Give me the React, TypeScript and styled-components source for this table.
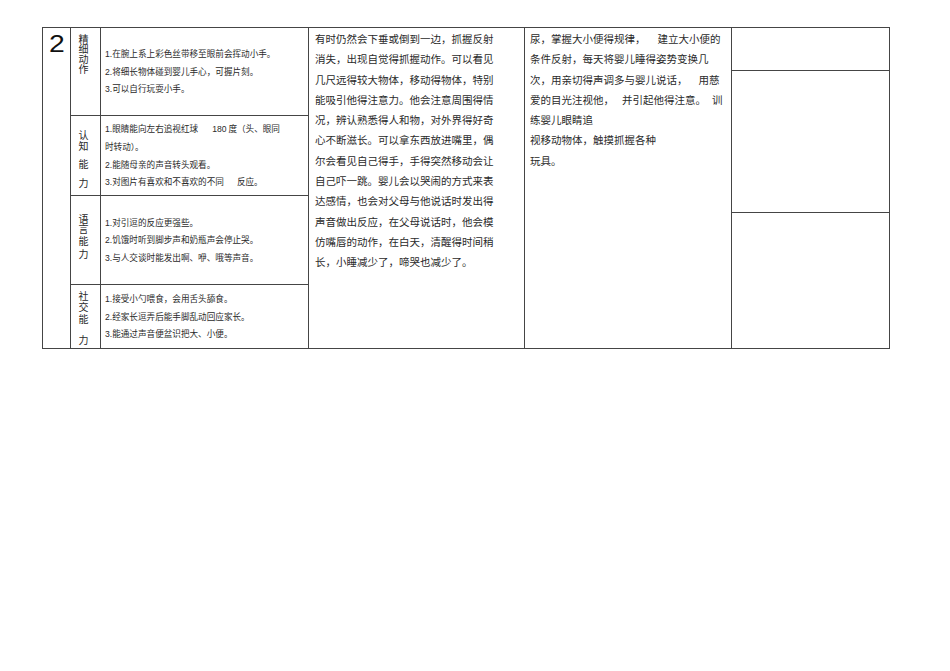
import React from "react";
import styled, { createGlobalStyle } from "styled-components";

const GlobalStyle = createGlobalStyle`
  html, body {
    margin: 0;
    padding: 0;
    background: #ffffff;
  }
  body {
    font-family: "Noto Sans CJK SC", "Noto Sans", sans-serif;
    color: #222;
  }
`;

const LINE = "#454545";

const Page = styled.div`
  width: 950px;
  height: 671px;
  box-sizing: border-box;
  padding: 27px 0 0 42px;
  background: #fff;
`;

const Table = styled.div`
  width: 848px;
  height: 322px;
  box-sizing: border-box;
  display: grid;
  grid-template-columns: 27px 237px 215px 206px 157px;
  grid-template-rows: 320px;
  gap: 1px;
  padding: 1px;
  background: ${LINE};
`;

const Cell = styled.div`
  background: #fff;
  box-sizing: border-box;
  min-width: 0;
  overflow: hidden;
`;

const Number = styled.div`
  font-family: "Liberation Sans", Arial, sans-serif;
  font-size: 24px;
  line-height: 24px;
  color: #111;
  padding: 4px 0 0 5px;
  transform: scaleX(1.18);
  transform-origin: left top;
`;

const Block = styled.div`
  display: grid;
  grid-template-columns: 29px 207px;
  grid-template-rows: 87px 79px 88px 63px;
  gap: 1px;
  background: ${LINE};
`;

const LabelCell = styled.div`
  background: #fff;
  box-sizing: border-box;
  overflow: hidden;
`;

const LabelText = styled.div<{ $pt: number }>`
  writing-mode: vertical-rl;
  text-orientation: upright;
  font-size: 10px;
  line-height: 10px;
  margin: ${(p) => p.$pt}px 0 0 7px;
  color: #2a2a2a;
  white-space: nowrap;
`;

const LabelChar = styled.span<{ $ls: number }>`
  letter-spacing: ${(p) => p.$ls}px;
`;

const ItemCell = styled.div`
  background: #fff;
  display: flex;
  flex-direction: column;
  justify-content: center;
  padding: 0 0 0 4px;
  box-sizing: border-box;
`;

const ItemLine = styled.div`
  font-size: 8.6px;
  line-height: 17.6px;
  height: 17.6px;
  white-space: nowrap;
  color: #2a2a2a;
`;

const Num = styled.span`
  font-family: "Liberation Sans", Arial, sans-serif;
`;

const Gap = styled.span<{ $w: number }>`
  display: inline-block;
  width: ${(p) => p.$w}px;
`;

const TextCell = styled.div<{ $pl: number }>`
  background: #fff;
  padding: 1px 0 0 ${(p) => p.$pl}px;
  box-sizing: border-box;
`;

const TextLine = styled.div`
  font-size: 10.5px;
  line-height: 20.3px;
  height: 20.3px;
  white-space: nowrap;
  color: #2a2a2a;
`;

const Stack = styled.div`
  display: grid;
  grid-template-rows: 42px 141px 135px;
  gap: 1px;
  background: ${LINE};
`;

const Blank = styled.div`
  background: #fff;
`;

type Seg = string | { gap: number };

interface Section {
  label: string;
  pt: number;
  spacing: number[];
  lines: Seg[][];
}

const sections: Section[] = [
  {
    label: "精细动作",
    pt: 6,
    spacing: [0, 0, 0, 0],
    lines: [
      ["1.", "在腕上系上彩色丝带移至眼前会挥动小手。"],
      ["2.", "将细长物体碰到婴儿手心，可握片刻。"],
      ["3.", "可以自行玩耍小手。"],
    ],
  },
  {
    label: "认知能力",
    pt: 14,
    spacing: [1.5, 8, 8.5, 0],
    lines: [
      ["1.", "眼睛能向左右追视红球", { gap: 14 }, "180", " 度（头、眼同"],
      ["时转动）。"],
      ["2.", "能随母亲的声音转头观看。"],
      ["3.", "对图片有喜欢和不喜欢的不同", { gap: 13 }, "反应。"],
    ],
  },
  {
    label: "语言能力",
    pt: 18,
    spacing: [0, 2.5, 2.5, 0],
    lines: [
      ["1.", "对引逗的反应更强些。"],
      ["2.", "饥饿时听到脚步声和奶瓶声会停止哭。"],
      ["3.", "与人交谈时能发出啊、咿、哦等声音。"],
    ],
  },
  {
    label: "社交能力",
    pt: 5.5,
    spacing: [1.5, 2, 11, 0],
    lines: [
      ["1.", "接受小勺喂食，会用舌头舔食。"],
      ["2.", "经家长逗弄后能手脚乱动回应家长。"],
      ["3.", "能通过声音便盆识把大、小便。"],
    ],
  },
];

const middleLines = [
  "有时仍然会下垂或倒到一边，抓握反射",
  "消失，出现自觉得抓握动作。可以看见",
  "几尺远得较大物体，移动得物体，特别",
  "能吸引他得注意力。他会注意周围得情",
  "况，辨认熟悉得人和物，对外界得好奇",
  "心不断滋长。可以拿东西放进嘴里，偶",
  "尔会看见自己得手，手得突然移动会让",
  "自己吓一跳。婴儿会以哭闹的方式来表",
  "达感情，也会对父母与他说话时发出得",
  "声音做出反应，在父母说话时，他会模",
  "仿嘴唇的动作，在白天，清醒得时间稍",
  "长，小睡减少了，啼哭也减少了。",
];

const trainingLines: Seg[][] = [
  ["尿，掌握大小便得规律，", { gap: 12 }, "建立大小便的"],
  ["条件反射，每天将婴儿睡得姿势变换几"],
  ["次，用亲切得声调多与婴儿说话，", { gap: 11 }, "用慈"],
  ["爱的目光注视他，", { gap: 8 }, "并引起他得注意。", { gap: 6 }, "训"],
  ["练婴儿眼睛追"],
  ["视移动物体，触摸抓握各种"],
  ["玩具。"],
];

const renderSegs = (segs: Seg[]) =>
  segs.map((s, i) => {
    if (typeof s !== "string") return <Gap key={i} $w={s.gap} />;
    if (/^[0-9.]+$/.test(s)) return <Num key={i}>{s}</Num>;
    return <React.Fragment key={i}>{s}</React.Fragment>;
  });

export default function App() {
  return (
    <>
      <GlobalStyle />
      <Page>
        <Table>
          <Cell>
            <Number>2</Number>
          </Cell>
          <Block>
            {sections.map((sec) => (
              <React.Fragment key={sec.label}>
                <LabelCell>
                  <LabelText $pt={sec.pt}>
                    {sec.label.split("").map((ch, i) => (
                      <LabelChar key={i} $ls={sec.spacing[i]}>
                        {ch}
                      </LabelChar>
                    ))}
                  </LabelText>
                </LabelCell>
                <ItemCell>
                  {sec.lines.map((line, i) => (
                    <ItemLine key={i}>{renderSegs(line)}</ItemLine>
                  ))}
                </ItemCell>
              </React.Fragment>
            ))}
          </Block>
          <TextCell $pl={6}>
            {middleLines.map((l, i) => (
              <TextLine key={i}>{l}</TextLine>
            ))}
          </TextCell>
          <TextCell $pl={5}>
            {trainingLines.map((l, i) => (
              <TextLine key={i}>{renderSegs(l)}</TextLine>
            ))}
          </TextCell>
          <Stack>
            <Blank />
            <Blank />
            <Blank />
          </Stack>
        </Table>
      </Page>
    </>
  );
}
